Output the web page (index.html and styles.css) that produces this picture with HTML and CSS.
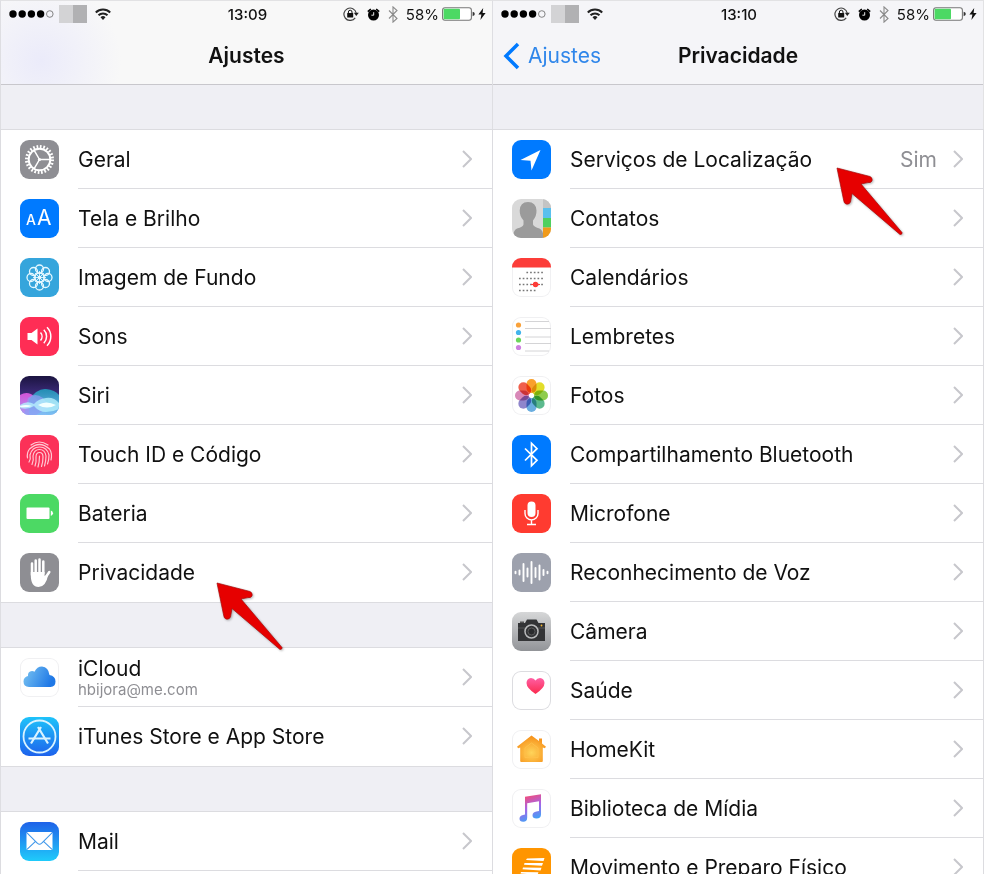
FILE: index.html
```html
<!DOCTYPE html>
<html lang="pt-BR">
<head>
    <meta charset="UTF-8">
    <meta name="viewport" content="width=device-width, initial-scale=1.0">
    <title>Ajustes - Privacidade</title>
    <link rel="stylesheet" href="styles.css">
</head>
<body>
    <!-- shared shapes -->
    <svg class="defs" width="0" height="0" aria-hidden="true">
        <symbol id="chevron" viewBox="0 0 10 18">
            <path d="M1 1l8 8-8 8" fill="none" stroke="#c7c7cc" stroke-width="2"/>
        </symbol>
        <symbol id="wifi" viewBox="0 0 16 12">
            <g fill="none" stroke="#222" stroke-width="2">
                <path d="M0.8 4.5a10.3 10.3 0 0 1 14.4 0"/>
                <path d="M3.5 7.3a6.4 6.4 0 0 1 9 0"/>
            </g>
            <path d="M5.5 9.3a3.6 3.6 0 0 1 5 0L8 12z" fill="#222"/>
        </symbol>
        <symbol id="dots" viewBox="0 0 45 8">
            <g fill="#000">
                <circle cx="4" cy="4" r="3.7"/>
                <circle cx="13.2" cy="4" r="3.7"/>
                <circle cx="22.4" cy="4" r="3.7"/>
                <circle cx="31.6" cy="4" r="3.7"/>
            </g>
            <circle cx="40.8" cy="4" r="3.3" fill="none" stroke="#777" stroke-width="0.9"/>
        </symbol>
        <symbol id="rotation" viewBox="0 0 16 14">
            <path d="M12.2 10.8A6.2 6.2 0 1 1 13.2 6" fill="none" stroke="#444" stroke-width="1.2"/>
            <path d="M10.8 5.8h5l-2.5 3.2z" fill="#222"/>
            <rect x="4.2" y="6" width="6" height="4.5" rx="0.5" fill="#111"/>
            <path d="M5.4 6.2V5a1.8 1.8 0 0 1 3.6 0v1.2" fill="none" stroke="#111" stroke-width="1"/>
        </symbol>
        <symbol id="alarm" viewBox="0 0 13 13">
            <circle cx="6.5" cy="7" r="5.5" fill="#000"/>
            <path d="M0.8 3.6L3.8 1M12.2 3.6L9.2 1" stroke="#000" stroke-width="1.6"/>
            <path d="M6.7 4.2v3H4.4" fill="none" stroke="#fff" stroke-width="0.9"/>
        </symbol>
        <symbol id="bt-small" viewBox="0 0 10 17">
            <path d="M1 4.5l8 8-4 3.6V0.9l4 3.6-8 8" fill="none" stroke="#8a8a8a" stroke-width="1.1"/>
        </symbol>
        <symbol id="battery" viewBox="0 0 33 14">
            <rect x="0.6" y="0.8" width="28.8" height="12.4" rx="2.4" fill="#fff" stroke="#777" stroke-width="1.1"/>
            <rect x="1.6" y="1.8" width="16.4" height="10.4" rx="1" fill="#4cd964"/>
            <path d="M30.6 4.8q2.2 0.6 2.2 2.2t-2.2 2.2z" fill="#333"/>
        </symbol>
        <symbol id="bolt" viewBox="0 0 8 12">
            <path d="M5.2 0L0.4 6.6h3L2.4 12l5.2-7h-3z" fill="#111"/>
        </symbol>
        <symbol id="arrow" viewBox="0 0 68 68">
            <path d="M1 1L34 9.500Q37 11 36 14Q35 16 32 15.600L25 17L66 65.500Q66.500 67.500 64 67.500L16 26.500L14.500 35Q13 38 10 37Q8 36.500 7.600 33Z" fill="#e60000" stroke="#a80a0a" stroke-width="0.700"/>
        </symbol>
    </svg>

    <main class="screens">
        <section class="screen">
            <header class="topbar topbar-tint">
                <div class="status">
                    <div class="status-left">
                        <svg class="dots"><use href="#dots"/></svg>
                        <span class="carrier"><i class="c1"></i><i class="c2"></i></span>
                        <svg class="wifi"><use href="#wifi"/></svg>
                    </div>
                    <time class="clock">13:09</time>
                    <div class="status-right">
                        <svg class="rotation"><use href="#rotation"/></svg>
                        <svg class="alarm"><use href="#alarm"/></svg>
                        <svg class="bt"><use href="#bt-small"/></svg>
                        <span class="percent">58%</span>
                        <svg class="battery"><use href="#battery"/></svg>
                        <svg class="bolt"><use href="#bolt"/></svg>
                    </div>
                </div>
                <div class="nav">
                    <h1>Ajustes</h1>
                </div>
            </header>

            <ul class="group">
                <li><a class="row" href="#">
                    <svg class="icon" viewBox="0 0 39 39">
                        <rect width="39" height="39" fill="#8e8e93"/>
                        <g fill="none" stroke="#fff">
                            <circle cx="19.500" cy="19.500" r="13" stroke-width="3" stroke-dasharray="1.700 1.703"/>
                            <circle cx="19.500" cy="19.500" r="10.800" stroke-width="2"/>
                            <path d="M19.500 19.500H30M19.500 19.500L14.200 10.300M19.500 19.500L14.200 28.700" stroke-width="1.500"/>
                        </g>
                        <circle cx="19.500" cy="19.500" r="1.600" fill="#fff"/>
                    </svg>
                    <span class="cell"><span class="label">Geral</span><svg class="chevron"><use href="#chevron"/></svg></span>
                </a></li>
                <li><a class="row" href="#">
                    <svg class="icon" viewBox="0 0 39 39">
                        <rect width="39" height="39" fill="#007aff"/>
                        <text class="glyph-small" x="6" y="26">A</text>
                        <text class="glyph-big" x="17" y="26">A</text>
                    </svg>
                    <span class="cell"><span class="label">Tela e Brilho</span><svg class="chevron"><use href="#chevron"/></svg></span>
                </a></li>
                <li><a class="row" href="#">
                    <svg class="icon" viewBox="0 0 39 39">
                        <rect width="39" height="39" fill="#35a5dc"/>
                        <g fill="none" stroke="#e6f8ff" stroke-width="1.300">
                            <circle cx="19.500" cy="11" r="4"/>
                            <circle cx="25.500" cy="13.500" r="4"/>
                            <circle cx="28" cy="19.500" r="4"/>
                            <circle cx="25.500" cy="25.500" r="4"/>
                            <circle cx="19.500" cy="28" r="4"/>
                            <circle cx="13.500" cy="25.500" r="4"/>
                            <circle cx="11" cy="19.500" r="4"/>
                            <circle cx="13.500" cy="13.500" r="4"/>
                            <circle cx="19.500" cy="19.500" r="4.500"/>
                            <path d="M19.500 13v13M13 19.500h13M15 15l9 9M24 15l-9 9" stroke-width="0.900"/>
                        </g>
                        <circle cx="19.500" cy="19.500" r="2" fill="#e6f8ff"/>
                    </svg>
                    <span class="cell"><span class="label">Imagem de Fundo</span><svg class="chevron"><use href="#chevron"/></svg></span>
                </a></li>
                <li><a class="row" href="#">
                    <svg class="icon" viewBox="0 0 39 39">
                        <rect width="39" height="39" fill="#ff2d55"/>
                        <path d="M7.500 16h4l6-4.500v16l-6-4.500h-4z" fill="#fff"/>
                        <g fill="none" stroke="#fff" stroke-width="1.500">
                            <path d="M20.500 15.500a6 6 0 0 1 0 8"/>
                            <path d="M23.800 12.800a9.500 9.500 0 0 1 0 13.400"/>
                            <path d="M27 10.300a13 13 0 0 1 0 18.400"/>
                        </g>
                    </svg>
                    <span class="cell"><span class="label">Sons</span><svg class="chevron"><use href="#chevron"/></svg></span>
                </a></li>
                <li><a class="row" href="#">
                    <svg class="icon" viewBox="0 0 39 39">
                        <defs>
                            <linearGradient id="siri-bg" x1="0" y1="0" x2="0" y2="1">
                                <stop offset="0" stop-color="#1b1440"/>
                                <stop offset="0.450" stop-color="#3b2a78"/>
                                <stop offset="1" stop-color="#8aa8ee"/>
                            </linearGradient>
                            <linearGradient id="siri-pink" x1="0" y1="0" x2="0" y2="1">
                                <stop offset="0" stop-color="#d452d8"/>
                                <stop offset="1" stop-color="#a99cf4"/>
                            </linearGradient>
                            <linearGradient id="siri-blue" x1="0" y1="0" x2="0" y2="1">
                                <stop offset="0" stop-color="#1fa0c0"/>
                                <stop offset="1" stop-color="#7cc4f6"/>
                            </linearGradient>
                        </defs>
                        <rect width="39" height="39" fill="url(#siri-bg)"/>
                        <path d="M0 19q8-5 15 2t12 18H0z" fill="url(#siri-pink)"/>
                        <path d="M9 24Q17 12 26 13t13 6v20H9z" fill="url(#siri-blue)" opacity="0.850"/>
                        <path d="M8 22q7-6 15 0l7 9-14 8H4z" fill="#8f9cf4" opacity="0.700"/>
                        <path d="M0 29q7-5 14-1 4-5 12-6t13 5v6q-6 3-13 3t-12-6q-6 4-14 2z" fill="#b5f0fc" opacity="0.800"/>
                        <path d="M0 30q6-2 12 0-6 2-12 1zM18 29q8-5 18 0-9 5-18 0z" fill="#f2ffff"/>
                    </svg>
                    <span class="cell"><span class="label">Siri</span><svg class="chevron"><use href="#chevron"/></svg></span>
                </a></li>
                <li><a class="row" href="#">
                    <svg class="icon" viewBox="0 0 39 39">
                        <rect width="39" height="39" fill="#fb3158"/>
                        <g fill="none" stroke="#ffc9d3" stroke-width="1.200" stroke-linecap="round">
                            <path d="M11 10q8-6 17 0"/>
                            <path d="M7.500 23q-1-5 2-9 10-9 20 0 3 4 1.500 11"/>
                            <path d="M9 27q2-3 1-7 2-8 9.500-8T29 20q0 5-1.500 9"/>
                            <path d="M12 29.500q2-4 1-8.500 1-6.500 6.500-6.500T26 21q0 5-1.500 10"/>
                            <path d="M15 31q1.500-4 1-9 0-4.500 3.500-4.500T23 22q0 5-1.500 9.500"/>
                            <path d="M18 32q1.500-5 1.500-11"/>
                        </g>
                    </svg>
                    <span class="cell"><span class="label">Touch ID e Código</span><svg class="chevron"><use href="#chevron"/></svg></span>
                </a></li>
                <li><a class="row" href="#">
                    <svg class="icon" viewBox="0 0 39 39">
                        <rect width="39" height="39" fill="#4cd964"/>
                        <rect x="6.500" y="13.500" width="23" height="11.500" rx="1" fill="#fff"/>
                        <path d="M30.800 16.500q2.200 0.800 2.200 2.700t-2.200 2.700z" fill="#fff"/>
                    </svg>
                    <span class="cell"><span class="label">Bateria</span><svg class="chevron"><use href="#chevron"/></svg></span>
                </a></li>
                <li><a class="row" href="#">
                    <svg class="icon" viewBox="0 0 39 39">
                        <rect width="39" height="39" fill="#8e8e93"/>
                        <g fill="none" stroke="#fff" stroke-width="2.500" stroke-linecap="round">
                            <path d="M12 22V10.500M15.700 20V7.500M19.500 20V6.500M23.300 20V8.500M24.500 26l4.800-7"/>
                        </g>
                        <path d="M10.800 19h13.800v4l3.600-1.500Q26 34 18.500 34q-7.700 0-7.700-12z" fill="#fff"/>
                    </svg>
                    <span class="cell"><span class="label">Privacidade</span><svg class="chevron"><use href="#chevron"/></svg></span>
                </a></li>
            </ul>

            <ul class="group">
                <li><a class="row" href="#">
                    <svg class="icon icon-light" viewBox="0 0 39 39">
                        <defs>
                            <linearGradient id="cloud" x1="0" y1="0" x2="1" y2="0.300">
                                <stop offset="0" stop-color="#7cc6f2"/>
                                <stop offset="1" stop-color="#1f78e6"/>
                            </linearGradient>
                        </defs>
                        <path d="M9 29q-5.500-0.500-5.500-5.500 0-4.500 4.500-5.500-0.500-4.500 4-5 1.500 0 2.500 0.800Q17 8.500 22 8.500q6.500 0.500 7.500 8.500 6 1 6 6.500 0 5-5 5.500z" fill="url(#cloud)"/>
                    </svg>
                    <span class="cell"><span class="label">iCloud<small>hbijora@me.com</small></span><svg class="chevron"><use href="#chevron"/></svg></span>
                </a></li>
                <li><a class="row" href="#">
                    <svg class="icon" viewBox="0 0 39 39">
                        <defs>
                            <linearGradient id="store" x1="0" y1="0" x2="0" y2="1">
                                <stop offset="0" stop-color="#1ec3fa"/>
                                <stop offset="1" stop-color="#1d62ec"/>
                            </linearGradient>
                        </defs>
                        <rect width="39" height="39" fill="url(#store)"/>
                        <g fill="none" stroke="#d9f3ff" stroke-width="1.800">
                            <circle cx="19.500" cy="19.500" r="16"/>
                            <path d="M18 10l10 16.500M21 10L11 26.500" stroke-width="2.200"/>
                            <path d="M8.500 21.500h22" stroke-width="2"/>
                        </g>
                    </svg>
                    <span class="cell"><span class="label">iTunes Store e App Store</span><svg class="chevron"><use href="#chevron"/></svg></span>
                </a></li>
            </ul>

            <ul class="group group-open">
                <li><a class="row" href="#">
                    <svg class="icon" viewBox="0 0 39 39">
                        <defs>
                            <linearGradient id="mail" x1="0" y1="0" x2="0" y2="1">
                                <stop offset="0" stop-color="#1f62e8"/>
                                <stop offset="1" stop-color="#1fcbfb"/>
                            </linearGradient>
                        </defs>
                        <rect width="39" height="39" fill="url(#mail)"/>
                        <rect x="6.500" y="10" width="26" height="18" rx="1.500" fill="#fff"/>
                        <path d="M7 10.800l10.500 10.500q2 1.800 4 0L32 10.800M7 27.400l8.500-8M32 27.400l-8.500-8" fill="none" stroke="#3f97ea" stroke-width="1.100"/>
                    </svg>
                    <span class="cell"><span class="label">Mail</span><svg class="chevron"><use href="#chevron"/></svg></span>
                </a></li>
            </ul>

            <svg class="pointer pointer-privacy" aria-hidden="true"><use href="#arrow"/></svg>
        </section>

        <section class="screen">
            <header class="topbar">
                <div class="status">
                    <div class="status-left">
                        <svg class="dots"><use href="#dots"/></svg>
                        <span class="carrier"><i class="c1"></i><i class="c2"></i></span>
                        <svg class="wifi"><use href="#wifi"/></svg>
                    </div>
                    <time class="clock">13:10</time>
                    <div class="status-right">
                        <svg class="rotation"><use href="#rotation"/></svg>
                        <svg class="alarm"><use href="#alarm"/></svg>
                        <svg class="bt"><use href="#bt-small"/></svg>
                        <span class="percent">58%</span>
                        <svg class="battery"><use href="#battery"/></svg>
                        <svg class="bolt"><use href="#bolt"/></svg>
                    </div>
                </div>
                <div class="nav">
                    <a class="back" href="#">
                        <svg viewBox="0 0 17 28"><path d="M15 2L3 14l12 12" fill="none" stroke="#007aff" stroke-width="3.500"/></svg>
                        Ajustes
                    </a>
                    <h1>Privacidade</h1>
                </div>
            </header>

            <ul class="group group-open">
                <li><a class="row" href="#">
                    <svg class="icon" viewBox="0 0 39 39">
                        <rect width="39" height="39" fill="#007aff"/>
                        <path d="M28.500 10L8.500 20l10 0.800L19.500 30.500z" fill="#fff"/>
                    </svg>
                    <span class="cell"><span class="label">Serviços de Localização</span><span class="value">Sim</span><svg class="chevron"><use href="#chevron"/></svg></span>
                </a></li>
                <li><a class="row" href="#">
                    <svg class="icon" viewBox="0 0 39 39">
                        <rect width="39" height="39" fill="#d9d9d9"/>
                        <path d="M16 3q8 0 8.500 8.500 0.200 5.500-3.500 10v4q1 2.500 6.500 4 4 1.500 4 9.500H1q0-8 4-9.500 6-1.500 6.500-4v-4Q7.500 17 7.700 11.500 8 3 16 3z" fill="#9b9b9b"/>
                        <rect x="31" width="8" height="9" fill="#c4c4c4"/>
                        <rect x="31" y="9" width="8" height="10" fill="#5ac0ee"/>
                        <rect x="31" y="19" width="8" height="9.500" fill="#4fd05e"/>
                        <rect x="31" y="28.500" width="8" height="10.500" fill="#f09a1a"/>
                    </svg>
                    <span class="cell"><span class="label">Contatos</span><svg class="chevron"><use href="#chevron"/></svg></span>
                </a></li>
                <li><a class="row" href="#">
                    <svg class="icon icon-light" viewBox="0 0 39 39">
                        <rect width="39" height="9.500" fill="#fc3d39"/>
                        <g stroke="#777" stroke-width="1.700" stroke-dasharray="1.700 2">
                            <path d="M14.400 14.500h18.200M7 20.500h25.800M7 26.500h25.800M7 32.500h18.300"/>
                        </g>
                        <circle cx="23.500" cy="26.500" r="2.700" fill="#fc3d39"/>
                        <path d="M19 26.500h9" stroke="#fc3d39" stroke-width="1.200"/>
                    </svg>
                    <span class="cell"><span class="label">Calendários</span><svg class="chevron"><use href="#chevron"/></svg></span>
                </a></li>
                <li><a class="row" href="#">
                    <svg class="icon icon-light" viewBox="0 0 39 39">
                        <circle cx="6.500" cy="8" r="2.600" fill="#f9a13a"/>
                        <circle cx="6.500" cy="15.500" r="2.600" fill="#42b4ec"/>
                        <circle cx="6.500" cy="23" r="2.600" fill="#6bd65a"/>
                        <circle cx="6.500" cy="30.500" r="2.600" fill="#cd7fe0"/>
                        <path d="M13 4.500h24M13 11.500h26M13 20h26M13 26.500h26M13 34h24" stroke="#d4d4d6" stroke-width="1"/>
                    </svg>
                    <span class="cell"><span class="label">Lembretes</span><svg class="chevron"><use href="#chevron"/></svg></span>
                </a></li>
                <li><a class="row" href="#">
                    <svg class="icon icon-light" viewBox="0 0 39 39">
                        <g class="petals">
                            <rect x="14.500" y="3" width="10" height="14" rx="5" fill="#f9a02c"/>
                            <rect x="14.500" y="3" width="10" height="14" rx="5" fill="#e2dd2a" transform="rotate(45 19.500 19.500)"/>
                            <rect x="14.500" y="3" width="10" height="14" rx="5" fill="#8fcc4c" transform="rotate(90 19.500 19.500)"/>
                            <rect x="14.500" y="3" width="10" height="14" rx="5" fill="#5cba8e" transform="rotate(135 19.500 19.500)"/>
                            <rect x="14.500" y="3" width="10" height="14" rx="5" fill="#6aaee0" transform="rotate(180 19.500 19.500)"/>
                            <rect x="14.500" y="3" width="10" height="14" rx="5" fill="#8f86cc" transform="rotate(225 19.500 19.500)"/>
                            <rect x="14.500" y="3" width="10" height="14" rx="5" fill="#d888b8" transform="rotate(270 19.500 19.500)"/>
                            <rect x="14.500" y="3" width="10" height="14" rx="5" fill="#f0604c" transform="rotate(315 19.500 19.500)"/>
                        </g>
                    </svg>
                    <span class="cell"><span class="label">Fotos</span><svg class="chevron"><use href="#chevron"/></svg></span>
                </a></li>
                <li><a class="row" href="#">
                    <svg class="icon" viewBox="0 0 39 39">
                        <rect width="39" height="39" fill="#007aff"/>
                        <path d="M13 13.500l12 11.800-5.500 5.500V8.200l5.500 5.500L13 25.500" fill="none" stroke="#fff" stroke-width="1.700"/>
                    </svg>
                    <span class="cell"><span class="label">Compartilhamento Bluetooth</span><svg class="chevron"><use href="#chevron"/></svg></span>
                </a></li>
                <li><a class="row" href="#">
                    <svg class="icon" viewBox="0 0 39 39">
                        <rect width="39" height="39" fill="#ff3b30"/>
                        <rect x="15.500" y="7.500" width="8" height="15.500" rx="4" fill="#fff"/>
                        <path d="M13 16v3.500a6.500 6.500 0 0 0 13 0V16M19.500 26v4M15 30.500h9" fill="none" stroke="#fff" stroke-width="1.400"/>
                    </svg>
                    <span class="cell"><span class="label">Microfone</span><svg class="chevron"><use href="#chevron"/></svg></span>
                </a></li>
                <li><a class="row" href="#">
                    <svg class="icon" viewBox="0 0 39 39">
                        <rect width="39" height="39" fill="#9da1ad"/>
                        <path d="M3.500 18.700v1.600M7.500 17.500v4M11.500 11v17M15.500 15.500v8M19.500 9v21M23.500 15v9M27.500 12.500v14M31.500 17v5M35.500 18.700v1.600" stroke="#fff" stroke-width="1.900" stroke-linecap="round"/>
                    </svg>
                    <span class="cell"><span class="label">Reconhecimento de Voz</span><svg class="chevron"><use href="#chevron"/></svg></span>
                </a></li>
                <li><a class="row" href="#">
                    <svg class="icon" viewBox="0 0 39 39">
                        <defs>
                            <linearGradient id="camera" x1="0" y1="0" x2="0" y2="1">
                                <stop offset="0" stop-color="#d6d7d8"/>
                                <stop offset="1" stop-color="#929498"/>
                            </linearGradient>
                        </defs>
                        <rect width="39" height="39" fill="url(#camera)"/>
                        <path d="M6 11h7l2-3.500h9.500l2 3.500H33v18H6z" fill="#333436"/>
                        <path d="M8 9.500h4V11H8zM6 15.500h27v1H6z" fill="#555"/>
                        <circle cx="19.500" cy="19.500" r="6.500" fill="#333436" stroke="#b9babb" stroke-width="1.500"/>
                        <circle cx="19.500" cy="19.500" r="3.500" fill="#2a2b2d" stroke="#666" stroke-width="0.800"/>
                        <circle cx="29.500" cy="13.500" r="0.900" fill="#f5b82e"/>
                    </svg>
                    <span class="cell"><span class="label">Câmera</span><svg class="chevron"><use href="#chevron"/></svg></span>
                </a></li>
                <li><a class="row" href="#">
                    <svg class="icon icon-light icon-outline" viewBox="0 0 39 39">
                        <defs>
                            <linearGradient id="heart" x1="0" y1="0" x2="0" y2="1">
                                <stop offset="0" stop-color="#ff5fa4"/>
                                <stop offset="1" stop-color="#fb2a4d"/>
                            </linearGradient>
                        </defs>
                        <path d="M23.500 23Q14.500 17 14.500 12q0.200-4.700 4.500-5 3 0 4.500 2.500Q25 7 28 7q4.300 0.300 4.500 5 0 5-9 11z" fill="url(#heart)"/>
                    </svg>
                    <span class="cell"><span class="label">Saúde</span><svg class="chevron"><use href="#chevron"/></svg></span>
                </a></li>
                <li><a class="row" href="#">
                    <svg class="icon icon-light" viewBox="0 0 39 39">
                        <defs>
                            <radialGradient id="home" cx="0.500" cy="0.650" r="0.600">
                                <stop offset="0" stop-color="#ffd45a"/>
                                <stop offset="1" stop-color="#f7941d"/>
                            </radialGradient>
                        </defs>
                        <path d="M19.500 5.500L27 11V8.500h3v5l4 3.200-1.200 1.500-2-0.800V31q0 1-1 1H9.200q-1 0-1-1V17.400l-2 0.800L5 16.700z" fill="url(#home)"/>
                        <path d="M19.500 13l6.500 5v9.500H13V18z" fill="none" stroke="#ffc04a" stroke-width="1"/>
                    </svg>
                    <span class="cell"><span class="label">HomeKit</span><svg class="chevron"><use href="#chevron"/></svg></span>
                </a></li>
                <li><a class="row" href="#">
                    <svg class="icon icon-light" viewBox="0 0 39 39">
                        <defs>
                            <linearGradient id="music" x1="0.300" y1="0" x2="0.600" y2="1">
                                <stop offset="0" stop-color="#fb4a6e"/>
                                <stop offset="0.500" stop-color="#a565e8"/>
                                <stop offset="1" stop-color="#35a8f8"/>
                            </linearGradient>
                        </defs>
                        <path d="M13 7.800l16-2.600v20q0 4.300-4.500 4.300-4 0-4-3.300 0.200-3.200 4-3.700l2.500-0.400V12.300l-11.800 2V28.500q0 4.300-4 4.300-3.700 0-3.700-3.300 0.200-3 3.500-3.500l2-0.400z" fill="url(#music)"/>
                    </svg>
                    <span class="cell"><span class="label">Biblioteca de Mídia</span><svg class="chevron"><use href="#chevron"/></svg></span>
                </a></li>
                <li><a class="row" href="#">
                    <svg class="icon" viewBox="0 0 39 39">
                        <rect width="39" height="39" fill="#ff9500"/>
                        <path d="M15 10.500l17.500-0.500-1 3L14 12zM12.500 15H31l-1 2.700-18-1zM11 19.500l18.500 0.300-1 2.600-18-1.200zM9 24l17.500 0.300-1 2.500L8.500 25.500zM7 28.500l16 0.500-1 2L6.500 29.700z" fill="#fff"/>
                    </svg>
                    <span class="cell"><span class="label">Movimento e Preparo Físico</span><svg class="chevron"><use href="#chevron"/></svg></span>
                </a></li>
            </ul>

            <svg class="pointer pointer-location" aria-hidden="true"><use href="#arrow"/></svg>
        </section>
    </main>
</body>
</html>
```
FILE: styles.css
```css
* {
    box-sizing: border-box;
}
body {
    margin: 0;
    font-family: Inter, "Liberation Sans", sans-serif;
    font-size: 21px;
    color: #111;
    background-color: #efeff4;
}
.defs {
    position: absolute;
}
.screens {
    display: grid;
    grid-template-columns: 1fr 1fr;
    height: 100vh;
    overflow: hidden;
}
.screen {
    position: relative;
    display: flex;
    flex-direction: column;
    min-width: 0;
    border-left: 1px solid #dedee2;
    border-top: 1px solid #e2e2e4;
}
.screen:last-child {
    border-right: 1px solid #e2e2e4;
}

/* status bar + title */
.topbar {
    flex: none;
    background-color: #f5f5f8;
    border-bottom: 1px solid #c8c7cc;
}
.topbar-tint {
    background: radial-gradient(circle at 40px 60px, #ebebfa 0, #f8f8f8 80px);
}
.status {
    display: grid;
    grid-template-columns: 1fr auto 1fr;
    align-items: center;
    height: 26px;
    padding: 0 6px 0 8px;
    font-size: 15px;
}
.status-left,
.status-right {
    display: flex;
    align-items: center;
}
.status-right {
    justify-content: flex-end;
}
.dots {
    width: 45px;
    height: 8px;
}
.carrier {
    display: flex;
    height: 18px;
    margin: 0 8px 0 5px;
}
.carrier i {
    width: 14px;
}
.c1 {
    background-color: #d3d3d5;
}
.c2 {
    background-color: #b1b1b3;
}
.wifi {
    width: 16px;
    height: 12px;
}
.clock {
    font-weight: 500;
}
.rotation {
    width: 16px;
    height: 14px;
    margin-right: 8px;
}
.alarm {
    width: 13px;
    height: 13px;
    margin-right: 8px;
}
.bt {
    width: 10px;
    height: 17px;
    margin-right: 8px;
}
.battery {
    width: 33px;
    height: 14px;
    margin: 0 3px;
}
.bolt {
    width: 8px;
    height: 12px;
}
.nav {
    display: grid;
    grid-template-columns: 1fr auto 1fr;
    align-items: center;
    height: 57px;
}
.nav h1 {
    grid-column: 2;
    margin: 0;
    font-size: 21px;
    font-weight: 600;
}
.back {
    display: flex;
    align-items: center;
    gap: 8px;
    padding-left: 10px;
    color: #2f86ea;
    text-decoration: none;
}
.back svg {
    width: 17px;
    height: 28px;
}

/* lists */
.group {
    flex: none;
    margin: 45px 0 0;
    padding: 0;
    list-style: none;
    background-color: #fff;
    box-shadow: 0 0 0 1px #dcdce0;
}
.group + .group {
    margin-top: 46px;
}
.group-open {
    flex: 1 0 auto;
}
.row {
    display: flex;
    align-items: center;
    gap: 19px;
    height: 59px;
    padding-left: 19px;
    color: inherit;
    text-decoration: none;
}
.icon {
    flex: none;
    width: 39px;
    height: 39px;
    border-radius: 9px;
}
.icon-light {
    background-color: #fff;
    box-shadow: inset 0 0 0 1px #f0f0f2;
}
.icon-outline {
    box-shadow: inset 0 0 0 1px #dcdce0;
}
.glyph-small,
.glyph-big {
    fill: #fff;
    font-size: 14px;
    font-weight: 500;
}
.glyph-big {
    font-size: 21px;
    font-weight: 400;
}
.petals rect {
    mix-blend-mode: multiply;
}
.cell {
    flex: 1;
    display: flex;
    align-items: center;
    align-self: stretch;
    padding-right: 20px;
    border-bottom: 1px solid #dcdce0;
}
.group:not(.group-open) li:last-child .cell {
    border-bottom-color: transparent;
}
.label {
    flex: 1;
    white-space: nowrap;
}
.label small {
    display: block;
    font-size: 15px;
    line-height: 18px;
    color: #8e8e93;
}
.value {
    margin-right: 16px;
    color: #8e8e93;
}
.chevron {
    width: 10px;
    height: 18px;
}

/* red arrows over the rows */
.pointer {
    position: absolute;
    width: 68px;
    height: 68px;
    filter: drop-shadow(1px 1px 1px rgba(0, 0, 0, 0.3));
}
.pointer-privacy {
    top: 581px;
    left: 215px;
}
.pointer-location {
    top: 166px;
    left: 343px;
}
```
